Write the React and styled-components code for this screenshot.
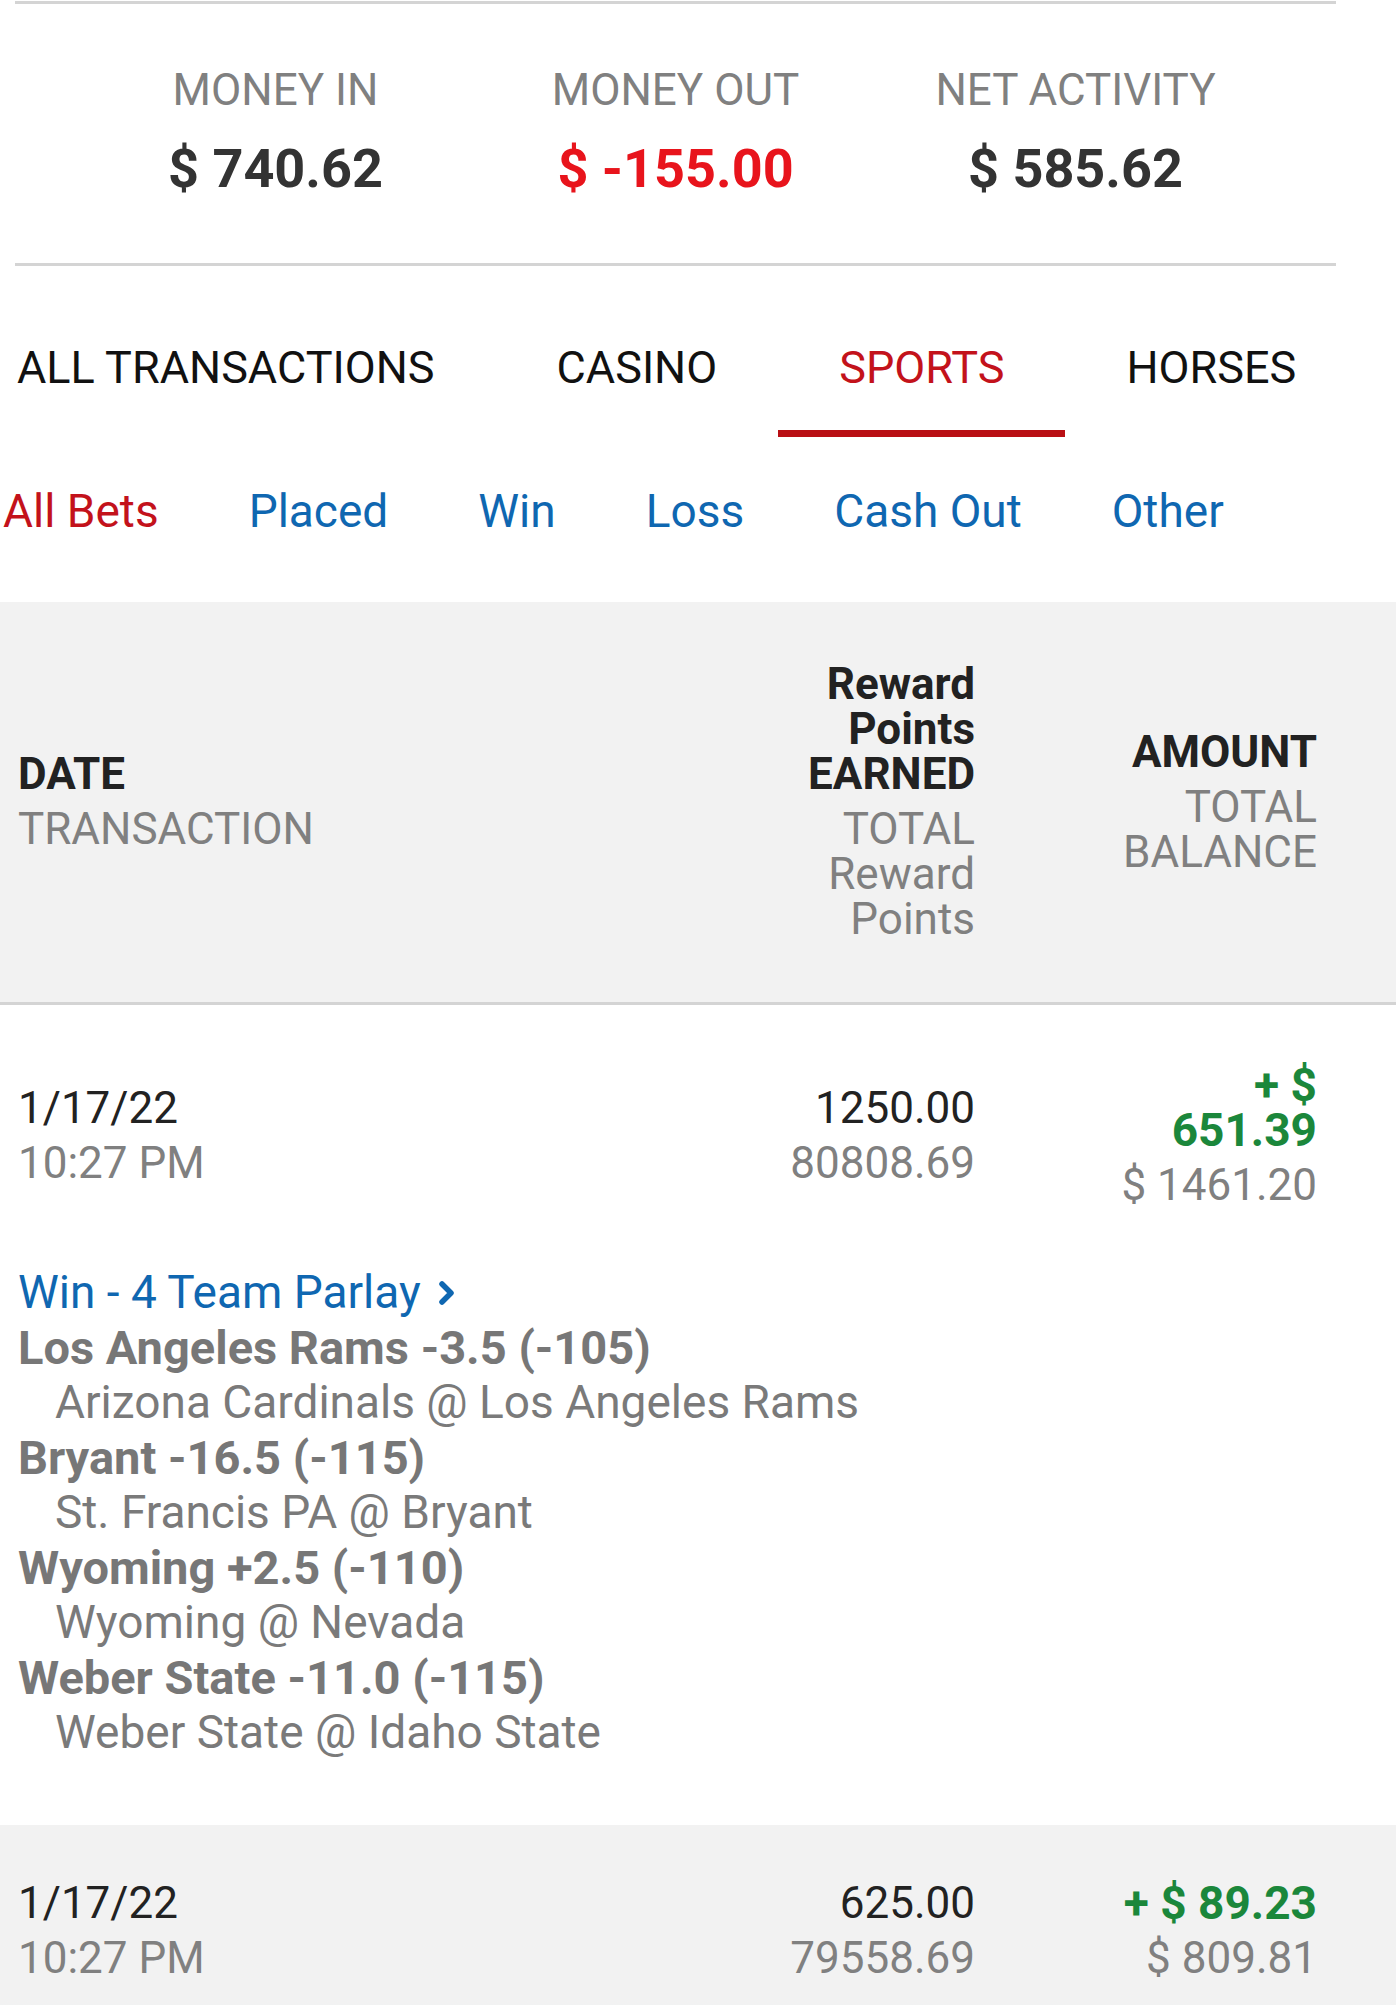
import styled, { createGlobalStyle } from "styled-components";

const GlobalStyle = createGlobalStyle`
  html, body {
    margin: 0;
    overflow: hidden;
    background: #fff;
    font-family: Roboto, "Liberation Sans", Arial, sans-serif;
  }
`;

const Page = styled.div`
  width: 1396px;
`;

const Summary = styled.section`
  margin: 1px 60px 0 15px;
  border-top: 3px solid #d4d4d4;
  border-bottom: 3px solid #d4d4d4;
  padding: 60px 0 62px;
  display: flex;
  justify-content: center;
`;

const Stat = styled.div`
  width: 400px;
  display: flex;
  flex-direction: column;
  align-items: center;
  gap: 21px;
`;

const StatLabel = styled.div`
  font-size: 44px;
  line-height: 52px;
  color: #808080;
`;

const StatValue = styled.div`
  font-size: 54px;
  line-height: 64px;
  font-weight: 700;
  color: ${(p) => (p.$negative ? "#e8141c" : "#333")};
`;

const Tabs = styled.nav`
  display: flex;
`;

const Tab = styled.div`
  padding: 76px 61px 36px;
  font-size: 45px;
  line-height: 52px;
  white-space: nowrap;
  color: ${(p) => (p.$active ? "#c3121b" : "#111")};
  border-bottom: 7px solid ${(p) => (p.$active ? "#b90f14" : "transparent")};

  &:first-child {
    padding-left: 17px;
  }
`;

const Filters = styled.div`
  display: flex;
  gap: 90px;
  padding: 48px 0 65px 3px;
`;

const Filter = styled.span`
  font-size: 46px;
  line-height: 52px;
  color: ${(p) => (p.$active ? "#c3121b" : "#0f67b1")};
`;

const Cols = styled.div`
  display: grid;
  grid-template-columns: 1fr 260px 205px;
  column-gap: 137px;
  align-items: center;
  padding: 0 79px 0 18px;
`;

const TableHead = styled(Cols)`
  background: #f2f2f2;
  padding-top: 60px;
  padding-bottom: 60px;
  border-bottom: 3px solid #d4d4d4;
`;

const Row = styled.div`
  background: ${(p) => (p.$shaded ? "#f2f2f2" : "#fff")};
  padding: ${(p) => (p.$shaded ? "56px 0 24px" : "58px 0 65px")};
`;

const Cell = styled.div`
  display: flex;
  flex-direction: column;
  gap: 10px;
  text-align: ${(p) => (p.$right ? "right" : "left")};
`;

const Line = styled.div`
  font-size: ${(p) => (p.$money ? "46px" : "44px")};
  line-height: 45px;
  font-weight: ${(p) => (p.$bold ? 700 : 400)};
  color: ${(p) => p.$color || "#222"};
`;

const Details = styled.div`
  margin-top: 57px;
  padding-left: 18px;
`;

const BetType = styled.a`
  display: flex;
  align-items: center;
  gap: 16px;
  font-size: 46px;
  line-height: 55px;
  color: #0f67b1;
  text-decoration: none;
`;

const Leg = styled.div`
  font-size: 47px;
  line-height: 55px;
  font-weight: 700;
  color: #777;
`;

const Match = styled.div`
  padding-left: 37px;
  font-size: 46px;
  line-height: 55px;
  color: #7a7a7a;
`;

const GRAY = "#808080";
const GREEN = "#1b873b";

const legs = [
  ["Los Angeles Rams -3.5 (-105)", "Arizona Cardinals @ Los Angeles Rams"],
  ["Bryant -16.5 (-115)", "St. Francis PA @ Bryant"],
  ["Wyoming +2.5 (-110)", "Wyoming @ Nevada"],
  ["Weber State -11.0 (-115)", "Weber State @ Idaho State"],
];

function Chevron() {
  return (
    <svg width="20" height="28" viewBox="0 0 20 28" fill="none">
      <polyline
        points="5,5 14,14 5,23"
        stroke="currentColor"
        strokeWidth="5.5"
        strokeLinecap="round"
        strokeLinejoin="round"
      />
    </svg>
  );
}

export default function App() {
  return (
    <Page>
      <GlobalStyle />
      <Summary>
        <Stat>
          <StatLabel>MONEY IN</StatLabel>
          <StatValue>$ 740.62</StatValue>
        </Stat>
        <Stat>
          <StatLabel>MONEY OUT</StatLabel>
          <StatValue $negative>$ -155.00</StatValue>
        </Stat>
        <Stat>
          <StatLabel>NET ACTIVITY</StatLabel>
          <StatValue>$ 585.62</StatValue>
        </Stat>
      </Summary>

      <Tabs>
        <Tab>ALL TRANSACTIONS</Tab>
        <Tab>CASINO</Tab>
        <Tab $active>SPORTS</Tab>
        <Tab>HORSES</Tab>
      </Tabs>

      <Filters>
        <Filter $active>All Bets</Filter>
        <Filter>Placed</Filter>
        <Filter>Win</Filter>
        <Filter>Loss</Filter>
        <Filter>Cash Out</Filter>
        <Filter>Other</Filter>
      </Filters>

      <TableHead>
        <Cell>
          <Line $bold>DATE</Line>
          <Line $color={GRAY}>TRANSACTION</Line>
        </Cell>
        <Cell $right>
          <Line $bold>Reward Points EARNED</Line>
          <Line $color={GRAY}>TOTAL Reward Points</Line>
        </Cell>
        <Cell $right>
          <Line $bold>AMOUNT</Line>
          <Line $color={GRAY}>TOTAL BALANCE</Line>
        </Cell>
      </TableHead>

      <Row>
        <Cols>
          <Cell>
            <Line>1/17/22</Line>
            <Line $color={GRAY}>10:27 PM</Line>
          </Cell>
          <Cell $right>
            <Line>1250.00</Line>
            <Line $color={GRAY}>80808.69</Line>
          </Cell>
          <Cell $right>
            <Line $bold $money $color={GREEN}>+ $ 651.39</Line>
            <Line $color={GRAY}>$ 1461.20</Line>
          </Cell>
        </Cols>
        <Details>
          <BetType href="#">
            Win - 4 Team Parlay
            <Chevron />
          </BetType>
          {legs.map(([leg, match]) => (
            <div key={leg}>
              <Leg>{leg}</Leg>
              <Match>{match}</Match>
            </div>
          ))}
        </Details>
      </Row>

      <Row $shaded>
        <Cols>
          <Cell>
            <Line>1/17/22</Line>
            <Line $color={GRAY}>10:27 PM</Line>
          </Cell>
          <Cell $right>
            <Line>625.00</Line>
            <Line $color={GRAY}>79558.69</Line>
          </Cell>
          <Cell $right>
            <Line $bold $money $color={GREEN}>+ $ 89.23</Line>
            <Line $color={GRAY}>$ 809.81</Line>
          </Cell>
        </Cols>
      </Row>
    </Page>
  );
}
